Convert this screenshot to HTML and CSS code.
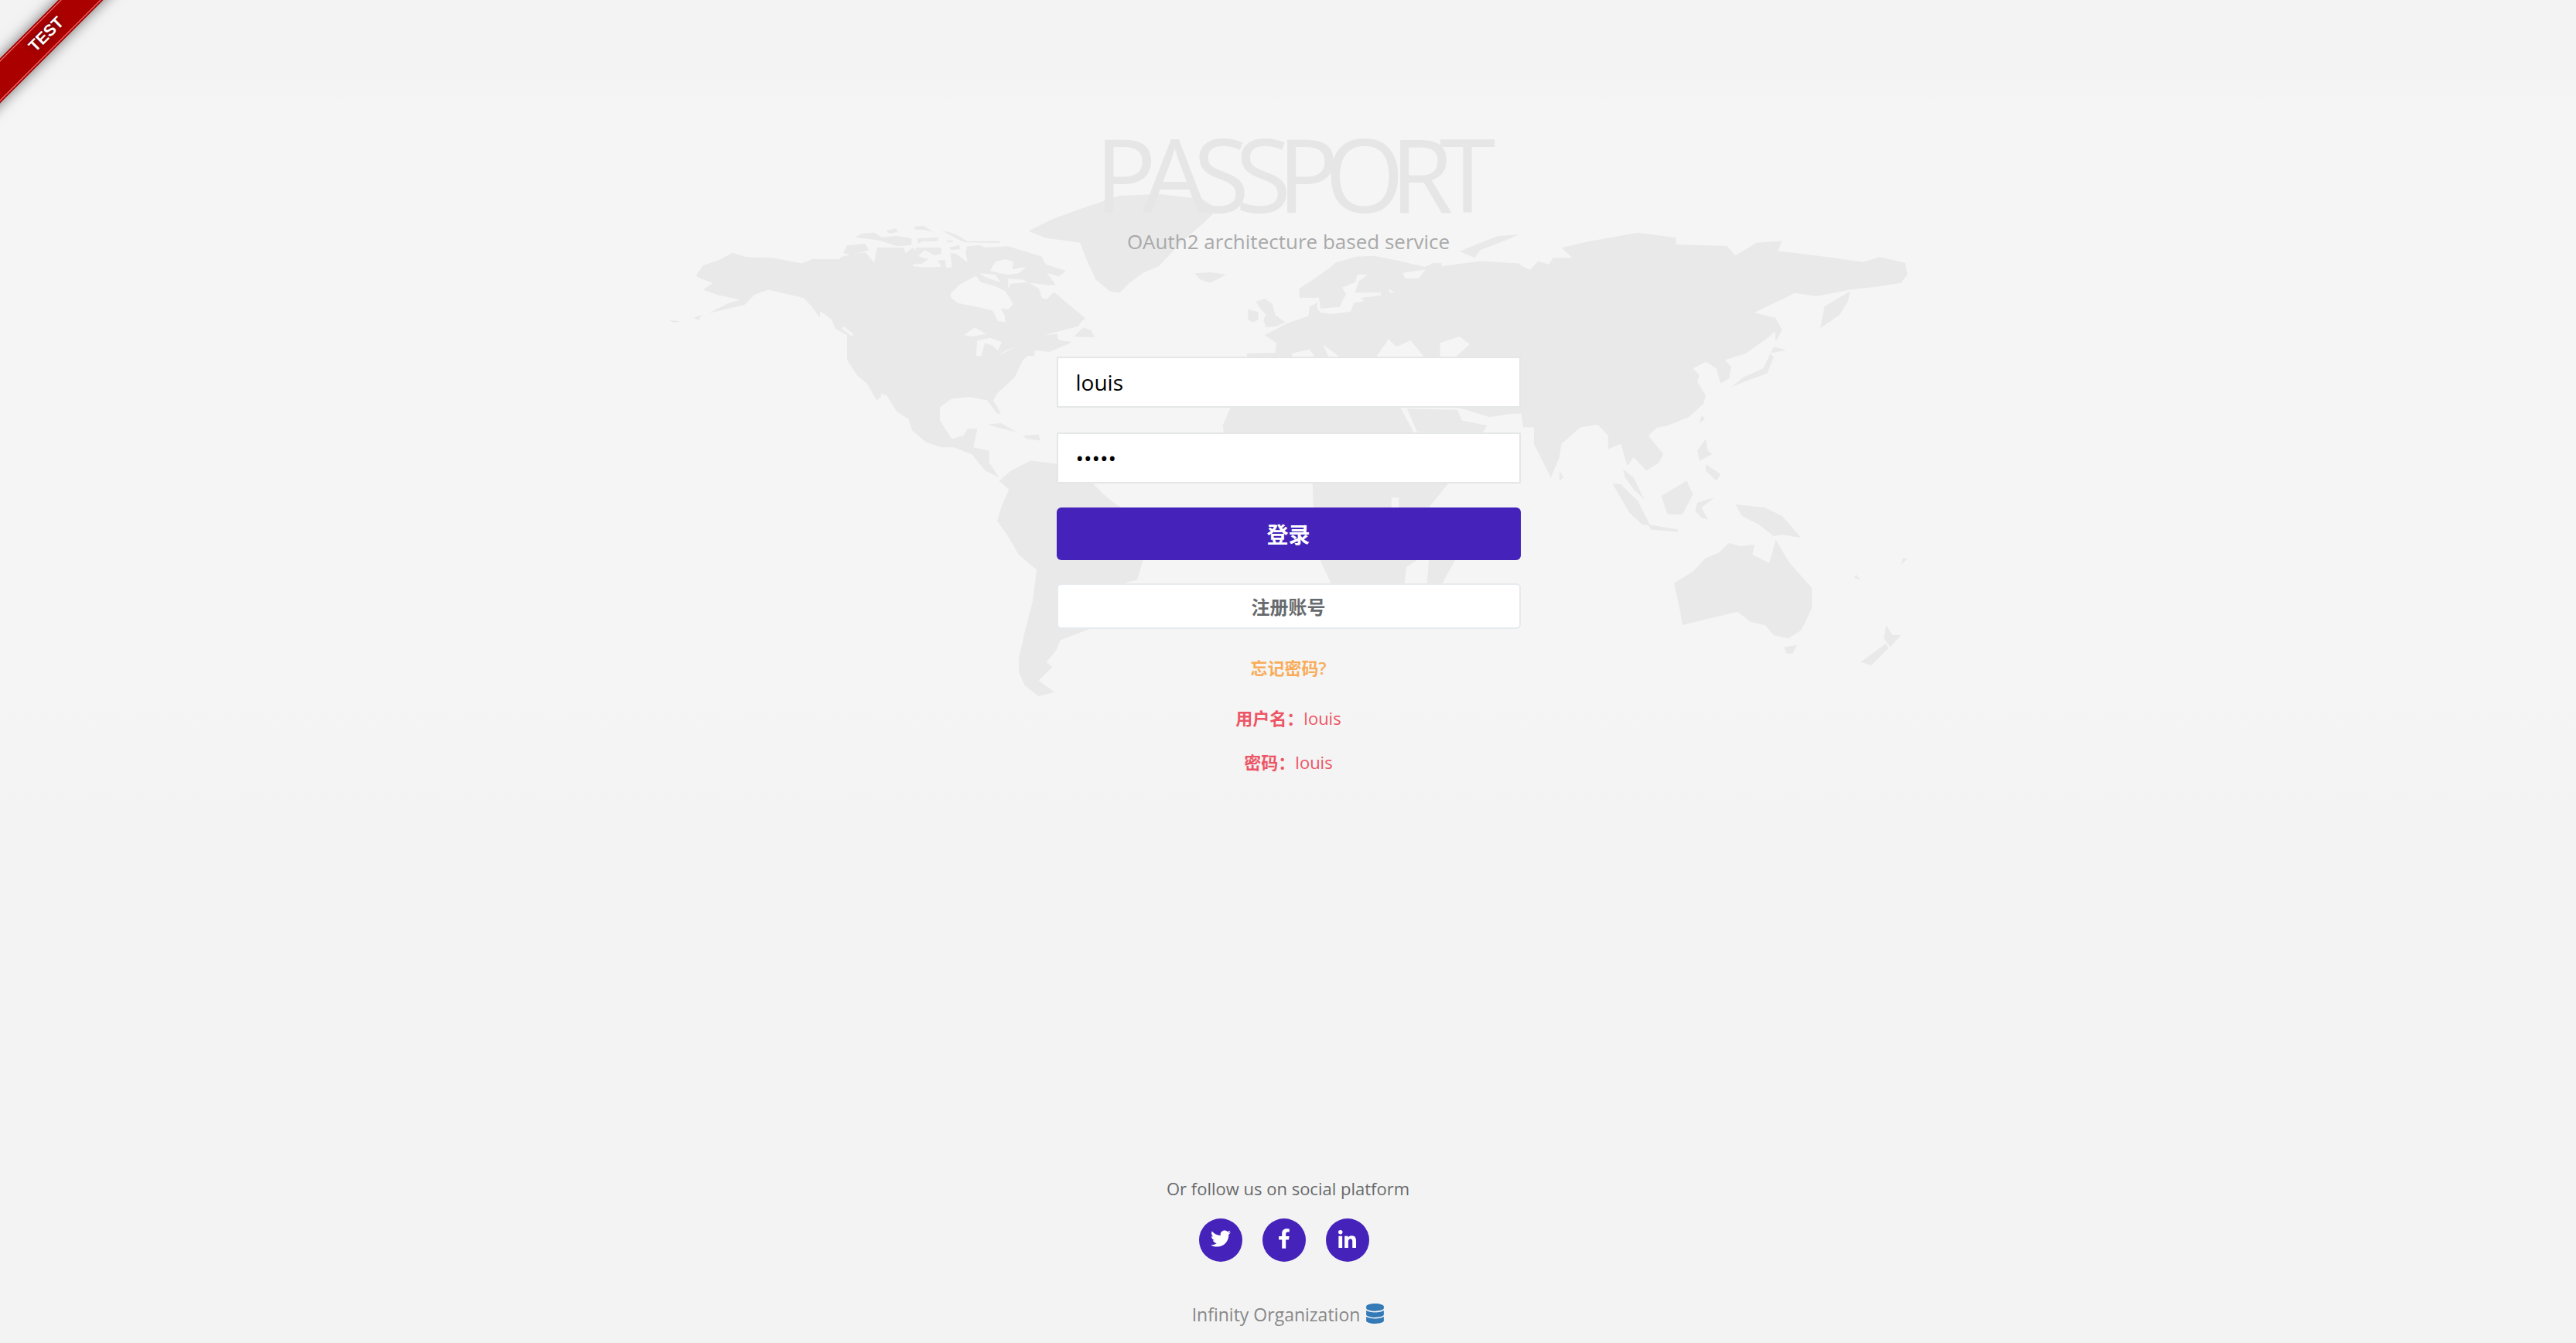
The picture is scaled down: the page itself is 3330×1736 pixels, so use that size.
FILE: index.html
```html
<!DOCTYPE html>
<html lang="zh-CN">
<head>
    <meta charset="UTF-8">
    <title>Passport</title>
    <link rel="stylesheet" href="styles.css">
</head>
<body>
    <div class="ribbon-box"><div class="ribbon"><span>TEST</span></div></div>

    <svg class="world-map" width="3330" height="1736" viewBox="0 0 3330 1736" aria-hidden="true">
        <!-- americas -->
        <g class="land" transform="translate(840,240) scale(.5102,.4336)">
            <polygon points="118,265 135,238 175,222 210,200 245,213 310,215 385,232 415,218 480,225 570,232 640,235 700,245 760,245 830,262 800,283 765,320 780,345 815,350 870,372 885,405 905,405 905,372 920,350 908,310 935,300 985,318 1020,320 1055,365 1100,395 1085,420 1000,445 1065,470 1010,495 975,490 945,520 925,570 880,620 870,640 890,680 880,680 855,640 810,630 765,635 735,660 735,700 765,755 795,745 805,725 830,725 820,780 860,790 860,825 885,870 850,850 815,800 770,780 740,780 700,765 665,730 655,695 620,670 590,625 575,640 550,590 525,565 500,520 500,450 465,415 435,400 410,360 390,335 300,310 265,325 240,355 150,380 200,350 230,340 170,325 135,310 160,290 120,272"/>
            <polygon points="960,135 1020,100 1090,70 1190,30 1290,25 1400,40 1440,70 1400,115 1350,165 1290,240 1250,260 1215,290 1190,320 1165,315 1130,280 1110,230 1090,170 1000,155"/>
            <polygon points="1380,262 1420,258 1460,265 1420,290 1395,280"/>
            <polygon points="885,880 915,850 965,820 1040,830 1100,860 1150,920 1175,945 1274,1020 1250,1115 1235,1175 1185,1190 1120,1320 1095,1330 1040,1355 1030,1385 1005,1420 1020,1435 985,1475 1025,1510 985,1522 950,1490 935,1450 935,1410 950,1330 970,1240 980,1145 935,1100 905,1040 880,1000 890,960 910,905"/>
            <polygon points="855,712 890,708 930,735 895,725"/>
            <polygon points="945,745 985,742 990,760 955,755"/>
            <polygon points="50,400 80,405 60,408"/>
            <polygon points="110,395 130,385 125,400"/>
        </g>
        <g class="sea" transform="translate(840,240) scale(.5102,.4336)">
            <polygon points="585,620 600,625 640,700 625,705 590,660"/>
        </g>
        <!-- canada in detail -->
        <g class="land" transform="translate(1060,270) scale(.3333)">
            <polygon points="0,195 75,195 85,185 175,168 210,208 222,150 260,150 325,150 332,172 360,150 385,185 420,195 395,212 360,215 362,228 470,225 458,200 485,198 490,230 512,226 505,170 530,175 572,208 565,170 570,145 620,140 640,150 730,145 860,185 875,215 955,240 925,262 880,248 915,295 880,297 850,310 860,345 905,320 1030,425 1000,445 925,470 900,460 855,490 920,485 925,510 975,515 890,555 880,535 835,550 830,570 0,570"/>
            <polygon points="135,110 165,95 210,92 240,110 300,105 355,115 355,140 300,145 240,125 215,120"/>
            <polygon points="90,170 105,142 175,135 190,160 120,180"/>
            <polygon points="255,85 295,75 300,90 270,95"/>
            <polygon points="365,70 400,65 440,90 400,80 370,80"/>
            <polygon points="470,82 530,100 570,125 700,125 695,132 560,130 520,110"/>
            <polygon points="378,115 460,110 455,125 400,125 380,135"/>
            <polygon points="490,122 515,122 515,130 495,130"/>
            <polygon points="500,150 540,140 545,155 510,160"/>
            <polygon points="370,150 405,150 470,150 470,175 445,180 405,160 385,180 370,170"/>
            <polygon points="985,495 1020,460 1050,470 1065,498"/>
        </g>
        <g class="sea" transform="translate(1060,270) scale(.3333)">
            <polygon points="505,330 540,295 575,275 605,260 625,285 680,300 720,320 750,370 730,390 700,385 715,410 720,440 690,435 670,395 610,380 535,365 510,345"/>
            <polygon points="620,250 680,255 700,285 640,265"/>
            <polygon points="730,270 790,275 850,310 860,345 880,350 910,320 880,295 800,285 740,290 730,310"/>
            <polygon points="680,205 720,195 750,205 745,235 800,225 770,250 730,255 700,250 660,240"/>
            <polygon points="558,490 600,460 645,485 590,495"/>
            <polygon points="605,570 610,510 660,500 705,515 690,550 670,530 640,520 625,570"/>
            <polygon points="690,570 760,535 720,550"/>
            <polygon points="0,400 15,405 45,430 60,465 105,490 105,570 0,570"/>
            <polygon points="90,455 130,485 125,495 85,465"/>
        </g>
        <!-- africa -->
        <g class="land" transform="translate(1280,500) scale(.4847,.3333)">
            <polygon points="700,-60 640,83 620,150 625,200 700,300 850,340 860,378 862,468 880,672 910,765 950,900 1000,930 1080,860 1105,765 1110,700 1150,660 1170,468 1220,378 1290,250 1130,177 1095,83 1040,-60"/>
            <polygon points="1170,672 1240,672 1205,765 1180,800 1165,765"/>
        </g>
        <g class="sea" transform="translate(1280,500) scale(.4847,.3333)">
            <polygon points="1070,430 1090,430 1090,468 1070,468"/>
        </g>
        <!-- asia, oceania -->
        <g class="land" transform="translate(1640,240) scale(.5486,.4336)">
            <polygon points="345,280 390,232 410,240 500,225 590,232 610,260 635,225 660,235 670,215 715,215 690,185 760,165 870,140 960,155 960,175 1080,180 1100,208 1150,170 1210,165 1200,195 1270,205 1330,215 1400,228 1440,213 1500,230 1505,265 1490,290 1440,300 1370,310 1290,330 1240,320 1200,345 1145,378 1195,395 1205,420 1180,450 1125,500 1075,520 1090,540 1085,575 1065,590 1055,545 1030,525 1000,545 1015,565 1010,585 1030,625 1025,650 990,690 940,715 915,722 895,745 930,800 920,825 890,850 860,810 845,835 830,770 800,785 800,745 775,712 735,720 690,770 685,810 665,870 625,770 625,720 600,720 595,680 570,680 520,690 470,670 440,660 300,660 300,400"/>
            <polygon points="326,665 350,735 505,735 515,715 455,700 445,668"/>
            <polygon points="1370,315 1310,360 1305,390 1300,425 1345,385 1365,345"/>
            <polygon points="955,1185 1000,1150 1030,1110 1060,1095 1085,1065 1110,1075 1145,1070 1140,1100 1180,1125 1195,1055 1225,1120 1280,1200 1280,1260 1255,1325 1225,1350 1190,1340 1170,1310 1135,1300 1105,1270 1040,1290 975,1310 970,1270"/>
            <polygon points="1215,1375 1245,1370 1235,1395 1220,1395"/>
            <polygon points="1395,1420 1455,1365 1460,1380 1420,1430"/>
            <polygon points="1455,1310 1470,1340 1490,1340 1465,1375 1450,1350"/>
            <polygon points="1100,950 1170,960 1210,985 1255,1050 1210,1040 1190,1045 1155,1010 1115,985"/>
            <polygon points="810,888 830,890 870,940 900,1015 880,1010 850,975"/>
            <polygon points="895,1010 965,1025 965,1032 900,1025"/>
            <polygon points="925,925 985,880 1000,920 975,980 940,980"/>
            <polygon points="1010,945 1050,930 1020,960 1035,995 1020,990 1005,970"/>
            <polygon points="1010,790 1030,755 1035,790 1045,800 1015,820"/>
            <polygon points="1030,830 1065,860 1055,880 1030,850"/>
            <polygon points="1090,600 1130,580 1175,560 1190,510 1180,500 1220,490 1190,480 1165,545 1120,570"/>
            <polygon points="1190,390 1210,430 1195,465"/>
            <polygon points="1020,685 1028,695 1015,710"/>
            <polygon points="685,850 695,870 685,880"/>
            <polygon points="835,845 860,870 885,935 860,905 840,870"/>
            <polygon points="1495,1110 1505,1112 1490,1130"/>
            <polygon points="1385,1160 1395,1175 1380,1170"/>
        </g>
        <!-- europe in detail -->
        <g class="land" transform="translate(1620,310) scale(.3333)">
            <polygon points="178,190 230,155 295,110 320,88 400,65 470,62 560,80 665,105 700,90 730,90 730,115 800,95 900,90 1030,95 1080,120 1080,470 150,470 85,440 90,400 45,370 130,325 215,295 218,260 245,245 250,225 180,225"/>
            <polygon points="10,240 45,228 75,250 85,290 125,320 90,335 50,340 40,310 50,290 30,270"/>
            <polygon points="-20,270 20,280 20,310 0,320 -20,310"/>
            <polygon points="-24,440 85,438 150,470 -24,470"/>
            <polygon points="800,45 860,20 950,-15 1030,-20 960,10 880,40 860,70"/>
        </g>
        <g class="sea" transform="translate(1620,310) scale(.3333)">
            <polygon points="345,185 395,165 405,135 445,135 410,160 395,205 495,205 495,215 418,225 430,238 390,245 378,278 300,288 262,282 250,268 335,260 360,210"/>
            <polygon points="245,222 255,225 262,272 250,272"/>
            <polygon points="580,128 670,115 640,150 590,150"/>
            <polygon points="525,190 550,205 530,205"/>
            <polygon points="150,440 220,425 250,470 150,470"/>
            <polygon points="270,405 330,450 330,470 300,470"/>
            <polygon points="480,450 525,385 555,415 610,390 660,450 660,470 480,470"/>
            <polygon points="725,400 800,375 840,405 790,450 790,470 725,470"/>
        </g>
    </svg>

    <main class="middle-box">
        <h1 class="logo-name">PASSPORT</h1>
        <p class="tagline">OAuth2 architecture based service</p>
        <form class="login-form">
            <input class="form-control" type="text" value="louis">
            <input class="form-control" type="password" value="louis">
            <button class="btn btn-primary" type="button">登录</button>
            <button class="btn btn-white" type="button">注册账号</button>
        </form>
        <p class="forgot"><a href="#">忘记密码?</a></p>
        <p class="hint hint-first"><strong>用户名：</strong>louis</p>
        <p class="hint"><strong>密码：</strong>louis</p>
    </main>

    <footer class="page-footer">
        <p class="follow">Or follow us on social platform</p>
        <div class="social">
            <a class="social-btn" href="#"><svg class="icon-twitter" viewBox="0 0 512 512"><path d="M459.37 151.716c.325 4.548.325 9.097.325 13.645 0 138.72-105.583 298.558-298.558 298.558-59.452 0-114.68-17.219-161.137-47.106 8.447.974 16.568 1.299 25.34 1.299 49.055 0 94.213-16.568 130.274-44.832-46.132-.975-84.792-31.188-98.112-72.772 6.498.974 12.995 1.624 19.818 1.624 9.421 0 18.843-1.3 27.614-3.573-48.081-9.747-84.143-51.98-84.143-102.985v-1.299c13.969 7.797 30.214 12.67 47.431 13.319-28.264-18.843-46.781-51.005-46.781-87.391 0-19.492 5.197-37.36 14.294-52.954 51.655 63.675 129.3 105.258 216.365 109.807-1.624-7.797-2.599-15.918-2.599-24.04 0-57.828 46.782-104.934 104.934-104.934 30.213 0 57.502 12.67 76.67 33.137 23.715-4.548 46.456-13.32 66.599-25.34-7.798 24.366-24.366 44.833-46.132 57.827 21.117-2.273 41.584-8.122 60.426-16.243-14.292 20.791-32.161 39.308-52.628 54.253z"/></svg></a>
            <a class="social-btn" href="#"><svg class="icon-facebook" viewBox="0 0 320 512"><path d="M279.14 288l14.22-92.66h-88.91v-60.13c0-25.35 12.42-50.06 52.24-50.06h40.42V6.26S260.43 0 225.36 0c-73.22 0-121.08 44.38-121.08 124.72v70.62H22.89V288h81.39v224h100.17V288z"/></svg></a>
            <a class="social-btn" href="#"><svg class="icon-linkedin" viewBox="0 0 448 448"><path d="M100.28 448H7.4V148.9h92.88zM53.79 108.1C24.09 108.1 0 83.5 0 53.8a53.79 53.79 0 0 1 107.58 0c0 29.7-24.1 54.3-53.79 54.3zM447.9 448h-92.68V302.4c0-34.7-.7-79.2-48.29-79.2-48.29 0-55.69 37.7-55.69 76.7V448h-92.78V148.9h89.08v40.8h1.3c12.4-23.5 42.69-48.3 87.88-48.3 94 0 111.28 61.9 111.28 142.3V448z"/></svg></a>
        </div>
        <p class="org">Infinity Organization <svg class="icon-database" viewBox="0 0 448 512"><path d="M448 73.143v45.714C448 159.143 347.667 192 224 192S0 159.143 0 118.857V73.143C0 32.857 100.333 0 224 0s224 32.857 224 73.143zM448 176v102.857C448 319.143 347.667 352 224 352S0 319.143 0 278.857V176c48.125 33.143 136.208 48.572 224 48.572S399.874 209.143 448 176zm0 160v102.857C448 479.143 347.667 512 224 512S0 479.143 0 438.857V336c48.125 33.143 136.208 48.572 224 48.572S399.874 369.143 448 336z"/></svg></p>
    </footer>
</body>
</html>
```

FILE: styles.css
```css
* {
    box-sizing: border-box;
}

html, body {
    height: 100%;
}

body {
    margin: 0;
    display: flex;
    flex-direction: column;
    align-items: center;
    overflow: hidden;
    font-family: "Open Sans", "Noto Sans CJK SC", sans-serif;
    color: #676a6c;
    background: linear-gradient(#f3f3f3 100px, #f5f5f5 130px, #f5f5f5 900px, #f3f3f3 1050px);
}

/* test ribbon in the corner */
.ribbon-box {
    position: absolute;
    top: 0;
    left: 0;
    width: 220px;
    height: 220px;
    overflow: hidden;
    z-index: 2;
}

.ribbon {
    position: absolute;
    top: 24px;
    left: -90px;
    width: 300px;
    padding: 2px 0;
    background-color: #a00;
    box-shadow: 0 0 18px rgba(0, 0, 0, 0.55);
    transform: rotate(-45deg);
}

.ribbon span {
    display: block;
    height: 37px;
    line-height: 34px;
    text-align: center;
    font-family: "Liberation Sans", Arial, sans-serif;
    font-size: 21px;
    font-weight: 700;
    color: white;
    border-top: 1.5px solid #ff7f7f;
    border-bottom: 1.5px solid #ff7f7f;
    text-shadow: 0 0 6px rgba(60, 0, 0, 0.7);
}

/* world map behind the form */
.world-map {
    position: absolute;
    top: 0;
    left: 0;
    filter: blur(0.7px);
}

.land {
    fill: #e9e9e9;
}

.sea {
    fill: #f5f5f5;
}

.middle-box {
    position: relative;
    width: 600px;
    margin-left: 1px;
    padding-top: 154px;
    text-align: center;
}

.logo-name {
    margin: 0 -100px;
    font-size: 132px;
    line-height: 140px;
    font-weight: 400;
    letter-spacing: -18px;
    color: #e6e6e6;
}

.tagline {
    margin: 0;
    font-size: 26px;
    line-height: 36px;
    color: #a9a9a9;
}

.login-form {
    margin-top: 131px;
}

.form-control {
    display: block;
    width: 100%;
    height: 66px;
    margin-bottom: 32px;
    padding: 6px 23px;
    border: 2px solid #e5e6e7;
    border-radius: 1px;
    background-color: white;
    font-family: inherit;
    font-size: 28px;
    color: black;
    outline: none;
}

.form-control + .form-control {
    margin-bottom: 31px;
}

.btn {
    display: block;
    width: 100%;
    border-radius: 6px;
    font-family: inherit;
    cursor: pointer;
}

.btn-primary {
    height: 68px;
    margin-bottom: 30px;
    border: none;
    background-color: #4522ba;
    font-size: 28px;
    font-weight: 700;
    color: white;
}

.btn-white {
    height: 59px;
    border: 2px solid #e7eaec;
    background-color: white;
    font-size: 24px;
    font-weight: 600;
    color: #676a6c;
}

.forgot {
    margin: 36px 0 0;
    font-size: 22px;
    line-height: 28px;
    font-weight: 600;
}

.forgot a {
    color: #f8ac59;
    text-decoration: none;
}

.hint {
    margin: 28px 0 0;
    font-size: 22px;
    line-height: 29px;
    color: #ed5565;
}

.hint-first {
    margin-top: 37px;
}

.page-footer {
    position: relative;
    margin-top: auto;
    padding-bottom: 21px;
    text-align: center;
}

.follow {
    margin: 0;
    font-size: 22px;
    line-height: 30px;
}

.social {
    display: flex;
    justify-content: center;
    gap: 26px;
    margin-top: 24px;
    padding-right: 10px;
}

.social-btn {
    display: flex;
    justify-content: center;
    align-items: center;
    width: 56px;
    height: 56px;
    padding-bottom: 4px;
    border-radius: 50%;
    background-color: #4522ba;
    fill: white;
}

.icon-twitter {
    width: 26px;
    height: 26px;
}

.icon-facebook {
    width: 16px;
    height: 26px;
}

.icon-linkedin {
    width: 23px;
    height: 23px;
}

.org {
    margin: 52px 0 0;
    font-size: 23px;
    line-height: 32px;
    color: #888;
}

.icon-database {
    width: 23px;
    height: 26px;
    margin-left: 2px;
    fill: #337ab7;
    vertical-align: -3px;
}
```
